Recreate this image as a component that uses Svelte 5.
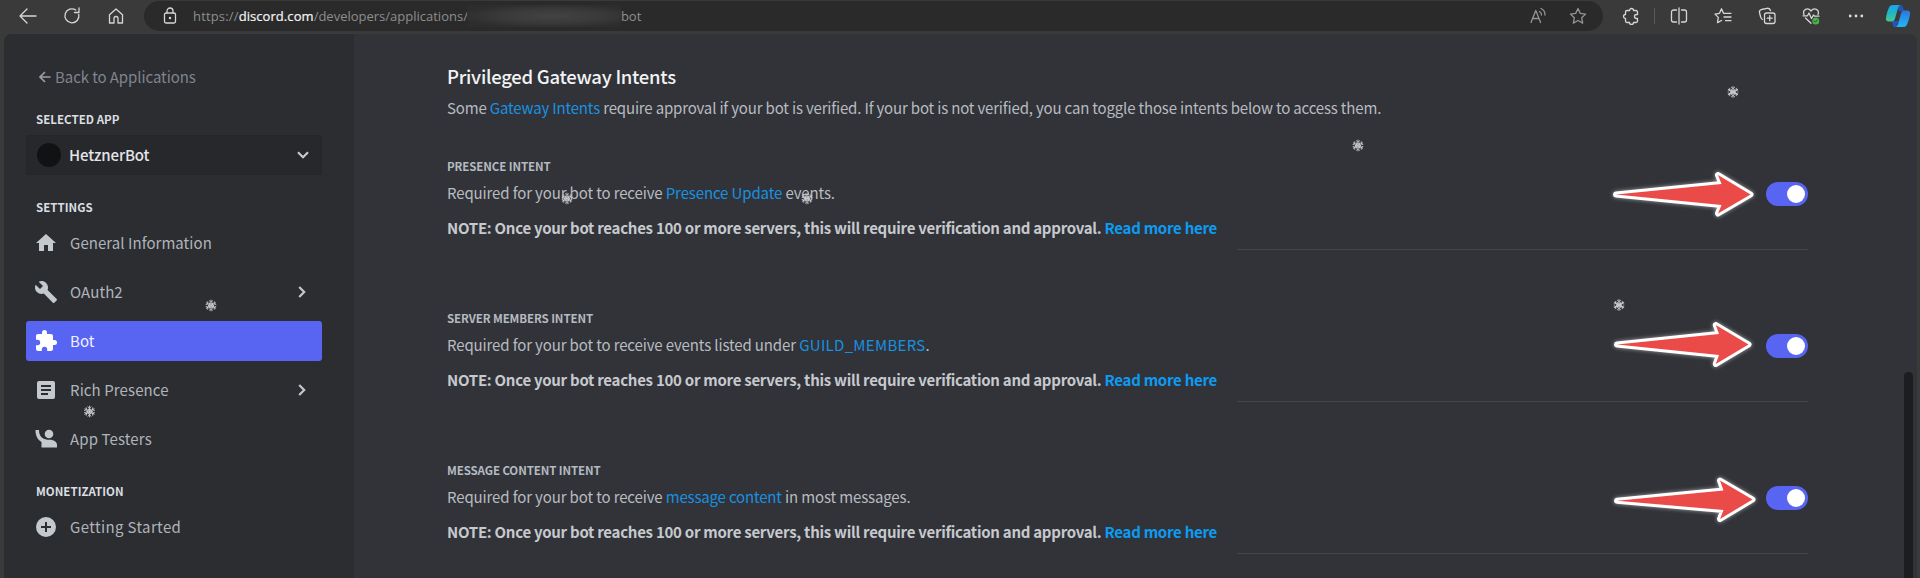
<script>
  const nav = [
    { label: 'General Information', icon: 'home', w: 0.05 },
    { label: 'OAuth2', icon: 'wrench', more: true, w: 0.1 },
    { label: 'Bot', icon: 'puzzle', active: true, w: 0.1 },
    { label: 'Rich Presence', icon: 'doc', more: true, w: 0.1 },
    { label: 'App Testers', icon: 'person', w: 0.12 }
  ];
  const icons = {
    home: 'M10 20v-6h4v6h5v-8h3L12 3 2 12h3v8z',
    wrench: 'M22.7 19l-9.1-9.1c.9-2.3.4-5-1.500-6.900-2-2-5-2.400-7.400-1.300L9 6 6 9 1.600 4.700C.4 7.100.9 10.100 2.900 12.100c1.900 1.900 4.600 2.400 6.900 1.500l9.100 9.100c.4.4 1 .4 1.400 0l2.300-2.300c.5-.4.5-1.100.1-1.400z',
    puzzle: 'M20.500 11H19V7c0-1.100-.9-2-2-2h-4V3.500a2.500 2.500 0 0 0-5 0V5H4c-1.100 0-2 .9-2 2v3.800h1.500a2.700 2.700 0 0 1 0 5.400H2V20c0 1.100.9 2 2 2h3.800v-1.500a2.700 2.700 0 0 1 5.400 0V22H17c1.100 0 2-.9 2-2v-4h1.500a2.500 2.500 0 0 0 0-5z',
    doc: 'M5 3h14a2 2 0 0 1 2 2v14a2 2 0 0 1-2 2H5a2 2 0 0 1-2-2V5a2 2 0 0 1 2-2zM7 7v2h10V7zM7 11v2h10v-2zM7 15v2h7v-2z',
    person: 'M1.500 3H5c0 4 1.200 6.500 4.200 8.500 2 1 4 1.300 6.300 1.300 4.500 0 7.500 2.200 7.500 5.200v2.500H7.500V15C3.500 12.500 1.500 9 1.500 3z',
    plus: 'M12 2a10 10 0 1 0 0 20 10 10 0 0 0 0-20zM11 7h2v4h4v2h-4v4h-2v-4H7v-2h4z'
  };
  const intents = [
    { title: 'Presence Intent', before: 'Required for your bot to receive ', link: 'Presence Update', after: ' events.', w: -0.12 },
    { title: 'Server Members Intent', before: 'Required for your bot to receive events listed under ', link: 'GUILD_MEMBERS', after: '.', w: 0.3 },
    { title: 'Message Content Intent', before: 'Required for your bot to receive ', link: 'message content', after: ' in most messages.', w: -0.18 }
  ];
  const flakes = [[1733, 92], [1358, 145.5], [567, 198.5], [807, 198.5], [211, 305.5], [89.5, 411.5], [1619, 305]];
  const arrows = [
    'M1616 194.500L1721.500 184L1718 175L1750.500 194.500L1718 213.500L1721.500 205Z',
    'M1617 344.500L1719 334L1715.800 325L1748.500 344.500L1715.800 364L1719 355Z',
    'M1617 500.700L1723.500 490.500L1720 480.500L1752.500 499.500L1720 519L1723.500 510Z'
  ];
</script>

<div class="window">
  <header>
    <svg class="tb back" width="20" height="20" viewBox="0 0 20 20"><path d="M18 10H2M9 3L2 10l7 7" /></svg>
    <svg class="tb reload" width="18" height="18" viewBox="0 0 18 18"><path d="M15.800 7.500A7 7 0 1 1 12.800 3M16 1v4.500h-4.500" /></svg>
    <svg class="tb house" width="18" height="18" viewBox="0 0 18 18"><path d="M2.500 7.800L9 2l6.500 5.800V16H11v-4.500a2 2 0 0 0-4 0V16H2.500z" /></svg>
    <div class="address">
      <svg class="tb" width="16" height="18" viewBox="0 0 16 18"><rect x="2.500" y="6" width="11" height="10" rx="1.500" /><path d="M5 6V4a3 3 0 0 1 6 0v2" /><circle cx="8" cy="11" r=".6" /></svg>
      <div class="url"><span class="scheme">https://</span><b>discord.com</b><span>/developers/applications/</span><i></i><span>bot</span></div>
      <svg class="tb dim" width="18" height="18" viewBox="0 0 18 18"><path d="M2 15.500L6.800 3.500l4.800 12M3.500 11.500h6.600M10.500 4.500a4 4 0 0 1 2 3.500M12 1.500a7 7 0 0 1 4 6.500" /></svg>
      <svg class="tb dim star" width="18" height="18" viewBox="0 0 18 18"><path d="M9 1.500l2.300 4.900 5.300.7-3.900 3.700 1 5.300L9 13.500l-4.700 2.600 1-5.300L1.400 7.100l5.300-.7z" /></svg>
    </div>
    <div class="tools">
      <svg class="tb" width="18" height="18" viewBox="0 0 18 18"><path d="M5 3.500h2.500a2 2 0 0 1 4 0H14a1.500 1.500 0 0 1 1.500 1.500v2.500h-1a2 2 0 0 0 0 4h1V14a1.500 1.500 0 0 1-1.500 1.500h-2.500a2 2 0 0 1-4 0H5A1.500 1.500 0 0 1 3.500 14v-2.500a2 2 0 0 1 0-4V5A1.500 1.500 0 0 1 5 3.500z" /></svg>
      <span class="rule"></span>
      <svg class="tb" width="18" height="18" viewBox="0 0 18 18"><path d="M9 1v16M6.500 3H3.500a2 2 0 0 0-2 2v8a2 2 0 0 0 2 2h3M11.500 3h3a2 2 0 0 1 2 2v8a2 2 0 0 1-2 2h-3" /></svg>
      <svg class="tb" width="18" height="18" viewBox="0 0 18 18"><path d="M10.500 6.300h-1L7.500 1.800 5.500 6.300l-4.500.8 3.300 3.300-.8 5.200 4-2.100M11 6.300h6M10 10h7M11.500 13.700H17" /></svg>
      <svg class="tb" width="18" height="18" viewBox="0 0 18 18"><rect x="6.500" y="6" width="10.500" height="10.500" rx="2" /><path d="M11.700 8.700v5M9.200 11.200h5M4.500 12.500C3 12 3 11.500 2.500 9.500l-1-4C1 3.500 2 3 3.500 2.500L9 1.300c2-.3 3 .2 3.500 2.200" /></svg>
      <svg class="tb" width="18" height="18" viewBox="0 0 18 18"><path d="M2 7.500C0 2.500 6 0 9 4c3-4 9-1.500 7 3.500M1 8.800h4.500L7 6l2.500 5.500L11.500 8l1 1.200H17M3.500 11L9 16.200" /><circle class="ok" cx="13.800" cy="14" r="3.500" /><path class="tick" d="M12.300 14l1.100 1.100 2-2.100" /></svg>
      <svg class="dots" width="18" height="18" viewBox="0 0 18 18"><circle cx="3.200" cy="9" r="1.400" /><circle cx="9" cy="9" r="1.400" /><circle cx="14.800" cy="9" r="1.400" /></svg>
      <svg class="copilot" width="26" height="24" viewBox="0 0 26 24">
        <defs>
          <linearGradient id="cpa" x1="0" y1="0" x2="0" y2="1"><stop offset="0" stop-color="#1da5e8" /><stop offset=".5" stop-color="#1fb7c4" /><stop offset="1" stop-color="#4cc88a" /></linearGradient>
          <linearGradient id="cpb" x1="0" y1="0" x2="0" y2="1"><stop offset="0" stop-color="#2a76df" /><stop offset="1" stop-color="#24b6f7" /></linearGradient>
        </defs>
        <path fill="#1f56c0" d="M12 1h3c2 0 2.500 1 3 3l1 3h-5zM7 17h6l-1 4c-.5 2-1 2-2.500 2S8 22 7.500 20z" />
        <path fill="url(#cpa)" d="M8 1h8c-2 0-2.600 1.500-3 3l-3 10.500c-.6 2-1.500 3-3.500 3H4C1.500 17.500.6 16 1 13.500 1.500 10 3 5.500 4 3.500 4.800 1.800 6 1 8 1z" />
        <path fill="url(#cpb)" d="M18 23h-8c2 0 2.600-1.500 3-3l3-10.500c.6-2 1.500-3 3.500-3H22c2.500 0 3.400 1.500 3 4-.5 3.500-2 8-3 10-.8 1.700-2 2.500-4 2.500z" />
      </svg>
    </div>
  </header>

  <div class="page">
    <aside>
      <a class="backlink"><svg width="12" height="12" viewBox="0 0 12 12"><path d="M11.500 6H1.200M6 1L1 6l5 5" /></svg><span>Back to Applications</span></a>
      <h6>Selected App</h6>
      <div class="select">
        <span class="avatar"></span><span class="name">HetznerBot</span>
        <svg class="chev" width="12" height="8" viewBox="0 0 12 8"><path d="M1 1.200l5 5 5-5" /></svg>
      </div>
      <h6>Settings</h6>
      <nav>
        {#each nav as n}
          <a class:active={n.active}>
            <svg class="ic" width="24" height="24" viewBox="0 0 24 24"><path fill-rule="evenodd" d={icons[n.icon]} />{#if n.icon === 'person'}<circle cx="15" cy="7" r="4.300" />{/if}</svg>
            <span style="letter-spacing:{n.w}px">{n.label}</span>
            {#if n.more}<svg class="chev" width="8" height="12" viewBox="0 0 8 12"><path d="M1.200 1l5 5-5 5" /></svg>{/if}
          </a>
        {/each}
      </nav>
      <h6>Monetization</h6>
      <nav>
        <a><svg class="ic" width="24" height="24" viewBox="0 0 24 24"><path fill-rule="evenodd" d={icons.plus} /></svg><span class="start">Getting Started</span></a>
      </nav>
    </aside>

    <main>
      <h2>Privileged Gateway Intents</h2>
      <p class="intro">Some <a>Gateway Intents</a> require approval if your bot is verified. If your bot is not verified, you can toggle those intents below to access them.</p>
      {#each intents as t}
        <section>
          <div class="copy">
            <h5>{t.title}</h5>
            <p>{t.before}<a style="letter-spacing:{t.w}px">{t.link}</a>{t.after}</p>
            <p class="note">NOTE: Once your bot reaches 100 or more servers, this will require verification and approval. <a>Read more here</a></p>
          </div>
          <div class="control"><span class="toggle"><span></span></span></div>
        </section>
      {/each}
    </main>
    <div class="scroll"><span></span></div>
  </div>

  <svg class="overlay" width="1920" height="578" viewBox="0 0 1920 578">
    {#each flakes as [x, y]}
      <g class="flake" transform="translate({x} {y})">
        {#each [0, 60, 120, 180, 240, 300] as r}
          <path transform="rotate({r})" d="M0 0V-5.800M-1.900-5L0-3.300 1.900-5M-1.500-2.600L0-1.300 1.500-2.600" />
        {/each}
      </g>
    {/each}
    {#each arrows as d}
      <path class="arrow" {d} />
      <path class="fill" {d} />
    {/each}
  </svg>
</div>

<style>
  :global(body) { margin: 0; background: #3a3a3a; }
  .window { position: relative; width: 1920px; height: 578px; overflow: hidden; display: flex; flex-direction: column; background: #3a3a3a; font: 15px/20px "Noto Sans CJK SC", "Noto Sans", sans-serif; color: #b8bbc0; }
  h2, h5, h6, p { margin: 0; }
  svg { flex: none; display: block; }

  header { height: 34px; flex: none; display: flex; align-items: flex-start; box-sizing: border-box; padding-left: 18px; }
  .tb { fill: none; stroke: #d6d6d6; stroke-width: 1.3; stroke-linejoin: round; stroke-linecap: round; }
  .dim { stroke: #949494; }
  .back { margin-top: 6px; }
  .reload { margin: 7px 0 0 25px; }
  .house { margin: 7px 0 0 26px; }
  .address { margin: 1px 0 0 19px; width: 1459px; height: 30px; border-radius: 15px; background: #2a2a2a; display: flex; align-items: center; box-sizing: border-box; padding: 0 16px 0 18px; }
  .url { flex: 1; margin-left: 15px; display: flex; align-items: center; white-space: pre; font: 13px/20px "Open Sans", "Noto Sans", sans-serif; color: #8e8e8e; }
  .scheme { letter-spacing: .16px; }
  .url b { font-weight: 400; color: #f4f4f4; letter-spacing: .07px; -webkit-text-stroke: .2px #f4f4f4; }
  .url i { width: 154px; height: 22px; margin-left: -1px; background: radial-gradient(ellipse at 55% 50%, #434343 0%, #393939 45%, #2d2d2d 78%); }
  .star { margin-left: 22px; }
  .tools { display: flex; align-items: center; height: 32px; margin-left: 19px; }
  .tools .tb + .tb { margin-left: 26px; }
  .rule { width: 1px; height: 16px; background: #595959; margin: 0 15px 0 14px; }
  .tools .rule + .tb { margin-left: 0; }
  .tb .ok { fill: #4caf50; stroke: none; }
  .tb .tick { stroke: #1f5a22; stroke-width: 1; }
  .dots { fill: #dcdcdc; margin-left: 27px; }
  .copilot { margin-left: 20px; }

  .page { flex: 1; min-height: 0; margin: 0 3px 0 4px; display: flex; background: #313338; border-radius: 8px 8px 0 0; overflow: hidden; }
  aside { width: 350px; flex: none; box-sizing: border-box; background: #2b2d31; padding: 33px 32px 0 22px; }
  .backlink { display: flex; align-items: center; height: 20px; padding-left: 13px; color: #80848e; letter-spacing: -.08px; }
  .backlink span { padding-bottom: 1px; }
  .backlink svg { margin-right: 4px; fill: none; stroke: #9a9da5; stroke-width: 1.6; }
  h6 { font-size: 11.5px; line-height: 16px; font-weight: 700; text-transform: uppercase; color: #dbdee1; padding: 1px 0 0 10px; margin-top: 23px; height: 15px; letter-spacing: .03px; }
  .select { height: 40px; margin-top: 9px; border-radius: 3px; background: #27282c; display: flex; align-items: center; padding: 0 13px 0 11px; box-shadow: inset 0 0 0 1px #25262a; }
  .avatar { width: 24px; height: 24px; border-radius: 50%; background: #111214; margin-right: 8px; }
  .name { flex: 1; color: #e3e5e8; font-weight: 500; letter-spacing: -.12px; padding-bottom: 1px; }
  .chev { fill: none; stroke: #c4c8cd; stroke-width: 2.2; }
  nav { display: flex; flex-direction: column; gap: 9px; margin-top: 9px; }
  nav a { display: flex; align-items: center; height: 40px; border-radius: 3px; padding: 0 16px 0 8px; color: #b0b4ba; }
  nav a span { flex: 1; margin-left: 12px; padding-bottom: 1px; }
  .start { letter-spacing: .37px; }
  .ic { fill: #c4c9ce; }
  nav a.active { background: #5865f2; color: #f0f1ff; }
  .active .ic { fill: #fff; }

  main { flex: 1; padding: 30px 0 0 93px; }
  h2 { font-size: 18.5px; line-height: 24px; font-weight: 500; color: #f2f3f5; letter-spacing: -.27px; }
  p { white-space: pre; letter-spacing: -.13px; }
  main a { color: #1a90e0; }
  .intro { margin-top: 10px; letter-spacing: -.17px; }
  section { height: 152px; display: flex; width: 1361px; }
  .intro + section { margin-top: 39px; }
  h5 { font-size: 11.5px; line-height: 16px; padding-top: 1px; height: 15px; font-weight: 700; text-transform: uppercase; color: #b5bac1; letter-spacing: -.1px; }
  .copy { width: 790px; flex: none; }
  .copy p { margin-top: 10px; }
  .copy .note { margin-top: 15px; font-weight: 700; letter-spacing: -.27px; color: #c6c9ce; }
  .note a { color: #0d9bf2; }
  .control { flex: 1; height: 92px; border-bottom: 1px solid #43454b; display: flex; justify-content: flex-end; box-sizing: content-box; }
  .toggle { margin-top: 25px; width: 42px; height: 24px; border-radius: 12px; background: #5865f2; display: flex; align-items: center; justify-content: flex-end; box-sizing: border-box; padding-right: 3px; }
  .toggle span { width: 18px; height: 18px; border-radius: 50%; background: #fff; }
  .scroll { width: 13px; display: flex; justify-content: flex-start; flex: none; }
  .scroll span { width: 9px; margin-top: 338px; background: #1c1d21; border-radius: 5px 5px 0 0; }

  .overlay { position: absolute; left: 0; top: 0; pointer-events: none; }
  .flake path { fill: none; stroke: #c9cbce; stroke-width: .9; }
  .arrow { fill: #fff; stroke: #fff; stroke-width: 6; stroke-linejoin: round; filter: drop-shadow(0 0 2px rgba(255, 255, 255, .55)); }
  .fill { fill: #ea4b48; }
</style>
